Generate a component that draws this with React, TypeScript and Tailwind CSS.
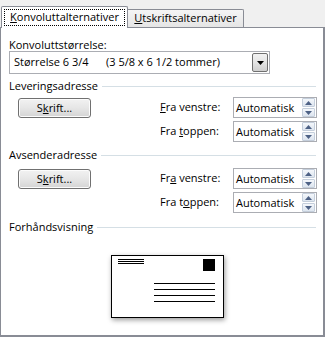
import React from "react";

const font = { fontFamily: '"Open Sans", "Liberation Sans", sans-serif' };

function Spin() {
  return (
    <div className="flex h-[21px] w-[84px] items-center border border-[#abadb3] bg-white">
      <span className="flex-1 pl-[2px] text-[11px] leading-[19px] text-black">Automatisk</span>
      <div className="mr-[1px] flex h-[19px] w-[13px] flex-col gap-[1px]">
        <div className="flex flex-1 items-center justify-center rounded-[1px] border border-[#c4cedb] bg-gradient-to-b from-[#f4f7fb] to-[#dde5ef]">
          <svg width="7" height="4" viewBox="0 0 7 4">
            <path d="M0 4 L3.5 0 L7 4 Z" fill="#4d6185" />
          </svg>
        </div>
        <div className="flex flex-1 items-center justify-center rounded-[1px] border border-[#c4cedb] bg-gradient-to-b from-[#f4f7fb] to-[#dde5ef]">
          <svg width="7" height="4" viewBox="0 0 7 4">
            <path d="M0 0 L3.5 4 L7 0 Z" fill="#4d6185" />
          </svg>
        </div>
      </div>
    </div>
  );
}

function Button() {
  return (
    <div className="mt-[1px] ml-[9px] flex h-[20px] w-[73px] items-center justify-center rounded-[3px] border border-[#707070] bg-gradient-to-b from-[#f2f2f2] via-[#e6e6e6] to-[#d4d4d4] text-[11px] text-black shadow-[inset_0_0_0_1px_#fcfcfc]">
      <span>
        S<span className="underline">k</span>rift...
      </span>
    </div>
  );
}

function Row({
  button,
  label,
}: {
  button: boolean;
  label: React.ReactNode;
}) {
  return (
    <div className="flex h-[21px] items-start">
      {button ? <Button /> : <div className="ml-[9px] w-[73px]" />}
      <div className="ml-[69px] flex h-[21px] w-[73px] items-center text-[11px] text-black">{label}</div>
      <Spin />
    </div>
  );
}

function GroupTitle({ text, mt }: { text: string; mt: string }) {
  return (
    <div className={`flex h-[14px] items-center ${mt}`}>
      <span className="text-[11px] leading-[14px] text-black">{text}</span>
      <div className="ml-[4px] mr-[7px] h-px flex-1 bg-[#d5dfe5]" />
    </div>
  );
}

export default function App() {
  return (
    <div className="h-[337px] w-[325px] overflow-hidden bg-[#f0f0f0]" style={font}>
      <div className="flex h-[27px] items-end pl-[1px] pt-[6px]">
        <div className="relative z-10 -mb-px flex h-[22px] w-[127px] items-start justify-center rounded-t-[2px] border border-b-0 border-[#898c95] bg-white pt-[2px]">
          <div className="flex h-[17px] w-[121px] items-center justify-center border border-dotted border-black text-[11px] text-black">
            <span>
              <span className="underline">K</span>onvoluttalternativer
            </span>
          </div>
        </div>
        <div className="flex h-[18px] w-[116px] items-center justify-center rounded-tr-[2px] border border-l-0 border-b-0 border-[#898c95] bg-gradient-to-b from-[#f5f5f5] to-[#e5e5e5] text-[11px] text-black">
          <span>
            <span className="underline">U</span>tskriftsalternativer
          </span>
        </div>
      </div>
      <div className="flex h-[310px] flex-col border-t border-r-2 border-b-2 border-l border-[#898c95] bg-white pl-[8px]">
        <div className="mt-[11px] h-[12px] text-[11px] leading-[12px] text-black">Konvoluttstørrelse:</div>
        <div className="flex h-[23px] w-[261px] items-center border border-[#abadb3] bg-white pr-[1px]">
          <span className="w-[96px] pl-[4px] text-[11px] text-black">Størrelse 6 3/4</span>
          <span className="flex-1 text-[11px] text-black">(3 5/8 x 6 1/2 tommer)</span>
          <div className="flex h-[19px] w-[16px] items-center justify-center rounded-[2px] border border-[#707070] bg-gradient-to-b from-[#f2f2f2] via-[#e4e4e4] to-[#cfcfcf]">
            <svg width="7" height="4" viewBox="0 0 7 4">
              <path d="M0 0 L7 0 L3.5 4 Z" fill="#000" />
            </svg>
          </div>
        </div>
        <GroupTitle text="Leveringsadresse" mt="mt-[5px]" />
        <div className="mt-[4px]">
          <Row
            button
            label={
              <span>
                <span className="underline">F</span>ra venstre:
              </span>
            }
          />
        </div>
        <div className="mt-[3px]">
          <Row
            button={false}
            label={
              <span>
                Fra <span className="underline">t</span>oppen:
              </span>
            }
          />
        </div>
        <GroupTitle text="Avsenderadresse" mt="mt-[6px]" />
        <div className="mt-[6px]">
          <Row
            button
            label={
              <span>
                Fr<span className="underline">a</span> venstre:
              </span>
            }
          />
        </div>
        <div className="mt-[3px]">
          <Row
            button={false}
            label={
              <span>
                Fra t<span className="underline">o</span>ppen:
              </span>
            }
          />
        </div>
        <GroupTitle text="Forhåndsvisning" mt="mt-[7px]" />
        <div className="mt-[21px] ml-[102px] h-[63px] w-[113px] border border-black bg-white shadow-[1px_2px_5px_rgba(0,0,0,0.4)]">
          <svg width="111" height="61" viewBox="0 0 111 61" className="block">
            <rect x="6" y="3" width="26" height="1" fill="#000" />
            <rect x="6" y="5" width="26" height="1" fill="#000" />
            <rect x="6" y="7" width="26" height="1" fill="#000" />
            <rect x="91" y="3" width="12" height="12" fill="#000" />
            <rect x="42" y="27" width="61" height="1" fill="#000" />
            <rect x="42" y="33" width="61" height="1" fill="#000" />
            <rect x="42" y="39" width="61" height="1" fill="#000" />
            <rect x="42" y="45" width="61" height="1" fill="#000" />
          </svg>
        </div>
      </div>
    </div>
  );
}
